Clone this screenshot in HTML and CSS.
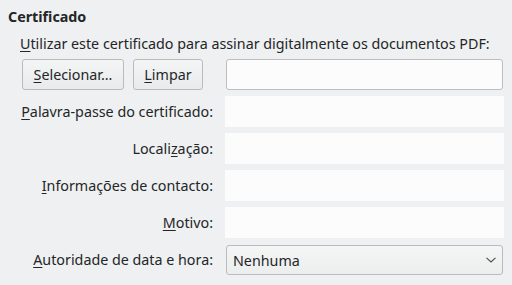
FILE: index.html
```html
<!DOCTYPE html>
<html>
  <head>
    <title>Certificado</title>
    <link rel="stylesheet" href="styles.css">
  </head>
  <body>
    <div class="panel">
      <h2 class="title">Certificado</h2>
      <p class="intro"><u>U</u>tilizar este certificado para assinar digitalmente os documentos PDF:</p>
      <div class="form">
        <div class="buttons">
          <button class="btn btn-select"><u>S</u>elecionar...</button>
          <button class="btn btn-clear"><u>L</u>impar</button>
        </div>
        <input class="cert-input" type="text">

        <label class="label"><u>P</u>alavra-passe do certificado:</label>
        <div class="field"></div>

        <label class="label">Locali<u>z</u>ação:</label>
        <div class="field"></div>

        <label class="label"><u>I</u>nformações de contacto:</label>
        <div class="field"></div>

        <label class="label"><u>M</u>otivo:</label>
        <div class="field"></div>

        <label class="label"><u>A</u>utoridade de data e hora:</label>
        <div class="select">
          <span>Nenhuma</span>
          <svg class="chevron" width="10" height="6" viewBox="0 0 10 6">
            <path d="M0.5 0.8 L5 5 L9.5 0.8" fill="none" stroke="#4d4d4d" stroke-width="1.1"/>
          </svg>
        </div>
      </div>
    </div>
  </body>
</html>
```

FILE: styles.css
```css
body {
  font-family: "Noto Sans", sans-serif;
  font-size: 14.3px;
  color: #232627;
  background-color: #eff0f1;
  margin: 0;
  padding: 0;
}
u {
  text-underline-offset: 2px;
}
.panel {
  padding: 7px 8px 0 8px;
}
.title {
  margin: 0;
  font-size: 14.3px;
  font-weight: 700;
  line-height: 20px;
}
.intro {
  margin: 7px 0 0 12px;
  line-height: 20px;
}
.form {
  display: grid;
  grid-template-columns: 192px 279px;
  grid-auto-rows: 31px;
  column-gap: 12px;
  row-gap: 6px;
  margin: 5px 0 0 13px;
}
.buttons {
  display: flex;
  gap: 9px;
  padding: 0 0 0 1px;
}
.btn {
  font-family: "Noto Sans", sans-serif;
  font-size: 14.3px;
  color: #232627;
  height: 31px;
  padding: 0;
  background: linear-gradient(#f4f5f5, #e9eaeb);
  border: 1px solid #b9bbbd;
  border-radius: 3px;
}
.btn-select {
  width: 102px;
}
.btn-clear {
  width: 70px;
}
.cert-input {
  box-sizing: border-box;
  margin: 0 1px;
  height: 31px;
  width: 277px;
  background-color: #fcfcfc;
  border: 1px solid #bcbebf;
  border-radius: 3px;
  padding: 0 6px;
}
.label {
  text-align: right;
  line-height: 31px;
  white-space: nowrap;
}
.field {
  background-color: #fcfcfc;
}
.select {
  box-sizing: border-box;
  display: flex;
  align-items: center;
  justify-content: space-between;
  margin: 1px 1px 0 1px;
  height: 30px;
  padding: 0 6px 0 6px;
  background: linear-gradient(#f4f5f5, #eceded);
  border: 1px solid #b9bbbd;
  border-radius: 3px;
}
```
